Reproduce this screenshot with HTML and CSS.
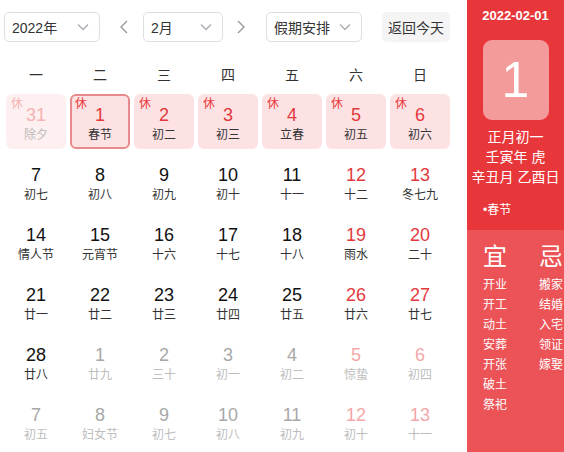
FILE: index.html
```html
<!DOCTYPE html>
<html lang="zh-CN">
<head>
    <meta charset="UTF-8">
    <meta name="viewport" content="width=device-width, initial-scale=1.0">
    <title>万年历</title>
    <link rel="stylesheet" href="styles.css">
</head>
<body>
    <div class="calendar">
        <div class="main">
            <div class="toolbar">
                <div class="select year">
                    <span>2022年</span>
                    <svg class="caret" width="12" height="8" viewBox="0 0 12 8"><polyline points="1,1.5 6,6.5 11,1.5" fill="none" stroke="#a8abb2" stroke-width="1.3"/></svg>
                </div>
                <div class="arrow prev">
                    <svg width="8" height="14" viewBox="0 0 8 14"><polyline points="7,1 1,7 7,13" fill="none" stroke="#999" stroke-width="1.4"/></svg>
                </div>
                <div class="select month">
                    <span>2月</span>
                    <svg class="caret" width="12" height="8" viewBox="0 0 12 8"><polyline points="1,1.5 6,6.5 11,1.5" fill="none" stroke="#a8abb2" stroke-width="1.3"/></svg>
                </div>
                <div class="arrow next">
                    <svg width="8" height="14" viewBox="0 0 8 14"><polyline points="1,1 7,7 1,13" fill="none" stroke="#999" stroke-width="1.4"/></svg>
                </div>
                <div class="select holiday">
                    <span>假期安排</span>
                    <svg class="caret" width="12" height="8" viewBox="0 0 12 8"><polyline points="1,1.5 6,6.5 11,1.5" fill="none" stroke="#a8abb2" stroke-width="1.3"/></svg>
                </div>
                <button class="today-btn">返回今天</button>
            </div>

            <div class="week">
                <span>一</span><span>二</span><span>三</span><span>四</span><span>五</span><span>六</span><span>日</span>
            </div>

            <div class="days">
                <div class="day rest prev"><i>休</i><b>31</b><small>除夕</small></div>
                <div class="day rest selected"><i>休</i><b>1</b><small>春节</small></div>
                <div class="day rest"><i>休</i><b>2</b><small>初二</small></div>
                <div class="day rest"><i>休</i><b>3</b><small>初三</small></div>
                <div class="day rest"><i>休</i><b>4</b><small>立春</small></div>
                <div class="day rest"><i>休</i><b>5</b><small>初五</small></div>
                <div class="day rest"><i>休</i><b>6</b><small>初六</small></div>

                <div class="day"><b>7</b><small>初七</small></div>
                <div class="day"><b>8</b><small>初八</small></div>
                <div class="day"><b>9</b><small>初九</small></div>
                <div class="day"><b>10</b><small>初十</small></div>
                <div class="day"><b>11</b><small>十一</small></div>
                <div class="day weekend"><b>12</b><small>十二</small></div>
                <div class="day weekend"><b>13</b><small>冬七九</small></div>

                <div class="day"><b>14</b><small>情人节</small></div>
                <div class="day"><b>15</b><small>元宵节</small></div>
                <div class="day"><b>16</b><small>十六</small></div>
                <div class="day"><b>17</b><small>十七</small></div>
                <div class="day"><b>18</b><small>十八</small></div>
                <div class="day weekend"><b>19</b><small>雨水</small></div>
                <div class="day weekend"><b>20</b><small>二十</small></div>

                <div class="day"><b>21</b><small>廿一</small></div>
                <div class="day"><b>22</b><small>廿二</small></div>
                <div class="day"><b>23</b><small>廿三</small></div>
                <div class="day"><b>24</b><small>廿四</small></div>
                <div class="day"><b>25</b><small>廿五</small></div>
                <div class="day weekend"><b>26</b><small>廿六</small></div>
                <div class="day weekend"><b>27</b><small>廿七</small></div>

                <div class="day"><b>28</b><small>廿八</small></div>
                <div class="day other"><b>1</b><small>廿九</small></div>
                <div class="day other"><b>2</b><small>三十</small></div>
                <div class="day other"><b>3</b><small>初一</small></div>
                <div class="day other"><b>4</b><small>初二</small></div>
                <div class="day other weekend"><b>5</b><small>惊蛰</small></div>
                <div class="day other weekend"><b>6</b><small>初四</small></div>

                <div class="day other"><b>7</b><small>初五</small></div>
                <div class="day other"><b>8</b><small>妇女节</small></div>
                <div class="day other"><b>9</b><small>初七</small></div>
                <div class="day other"><b>10</b><small>初八</small></div>
                <div class="day other"><b>11</b><small>初九</small></div>
                <div class="day other weekend"><b>12</b><small>初十</small></div>
                <div class="day other weekend"><b>13</b><small>十一</small></div>
            </div>
        </div>

        <div class="side">
            <div class="side-top">
                <div class="side-date">2022-02-01</div>
                <div class="side-day">1</div>
                <div class="side-lunar">
                    <div>正月初一</div>
                    <div>壬寅年 虎</div>
                    <div>辛丑月 乙酉日</div>
                </div>
                <div class="side-fest">•春节</div>
            </div>
            <div class="side-bottom">
                <div class="yiji">
                    <div class="yiji-col">
                        <div class="yiji-title">宜</div>
                        <div>开业</div>
                        <div>开工</div>
                        <div>动土</div>
                        <div>安葬</div>
                        <div>开张</div>
                        <div>破土</div>
                        <div>祭祀</div>
                    </div>
                    <div class="yiji-col">
                        <div class="yiji-title">忌</div>
                        <div>搬家</div>
                        <div>结婚</div>
                        <div>入宅</div>
                        <div>领证</div>
                        <div>嫁娶</div>
                    </div>
                </div>
            </div>
        </div>
    </div>
</body>
</html>
```

FILE: styles.css
```css
body {
    margin: 0;
    padding: 0;
    background: #fff;
    font-family: "Liberation Sans", "Noto Sans CJK SC", sans-serif;
    color: #333;
}
.calendar {
    display: flex;
    width: 564px;
    height: 452px;
    overflow: hidden;
}
.main {
    width: 467px;
    flex: none;
}

/* toolbar */
.toolbar {
    display: flex;
    align-items: center;
    padding: 12px 0 0 4px;
    height: 30px;
}
.select {
    flex: none;
    box-sizing: border-box;
    height: 30px;
    border: 1px solid #dcdfe6;
    border-radius: 5px;
    display: flex;
    align-items: center;
    justify-content: space-between;
    padding: 0 10px 0 7px;
    font-size: 14px;
    color: #333;
}
.select.year { width: 96px; }
.select.month { width: 80px; }
.select.holiday { width: 96px; }
.arrow {
    display: flex;
    align-items: center;
}
.arrow.prev { margin: 0 15px 0 20px; }
.arrow.next { margin: 0 21px 0 14px; }
.today-btn {
    flex: none;
    margin-left: 20px;
    height: 30px;
    width: 68px;
    padding: 0;
    border: none;
    border-radius: 5px;
    background: #f4f4f5;
    font-family: inherit;
    font-size: 14px;
    color: #333;
}

/* weekday header */
.week {
    display: grid;
    grid-template-columns: repeat(7, 60px);
    column-gap: 4px;
    margin: 18px 0 4px 6px;
    height: 30px;
    line-height: 30px;
    text-align: center;
    font-size: 14px;
    color: #333;
}

/* days */
.days {
    display: grid;
    grid-template-columns: repeat(7, 60px);
    grid-auto-rows: 55px;
    column-gap: 4px;
    row-gap: 5px;
    margin-left: 6px;
}
.day {
    position: relative;
    box-sizing: border-box;
    border-radius: 6px;
    padding-top: 9px;
    text-align: center;
}
.day b {
    display: block;
    font-weight: normal;
    font-size: 18px;
    line-height: 24px;
    color: #111;
}
.day small {
    display: block;
    font-size: 12px;
    line-height: 16px;
    color: #333;
}
.day i {
    position: absolute;
    top: 3px;
    left: 5px;
    font-style: normal;
    font-size: 12px;
    line-height: 14px;
    color: #e8373b;
}
.day.rest {
    background: #fde2e3;
}
.day.rest b,
.day.weekend b {
    color: #e3393d;
}
.day.selected {
    border: 2px solid #e88a8c;
    padding-top: 7px;
}
.day.selected i {
    top: 1px;
    left: 3px;
}
.day.prev {
    background: #fef0f0;
}
.day.prev i,
.day.prev b {
    color: #f5b3b4;
}
.day.prev small {
    color: #bbb;
}
.day.other b {
    color: #a8a8a8;
}
.day.other small {
    color: #bdbdbd;
}
.day.other.weekend b {
    color: #f3a7a8;
}

/* side panel */
.side {
    width: 97px;
    flex: none;
    color: #fff;
}
.side-top {
    background: #e8373b;
    height: 230px;
    box-sizing: border-box;
    padding-top: 6px;
}
.side-date {
    text-align: center;
    font-size: 13px;
    font-weight: bold;
    line-height: 20px;
}
.side-day {
    width: 66px;
    height: 80px;
    margin: 14px auto 0;
    border-radius: 9px;
    background: #f39a9b;
    text-align: center;
    font-size: 50px;
    line-height: 80px;
}
.side-lunar {
    margin-top: 7px;
    text-align: center;
    font-size: 14px;
    line-height: 20px;
}
.side-fest {
    margin-top: 14px;
    padding-left: 16px;
    font-size: 12px;
    line-height: 18px;
}
.side-bottom {
    background: #ec5357;
    height: 222px;
    box-sizing: border-box;
    padding: 14px 0 0 16px;
}
.yiji {
    display: flex;
}
.yiji-col {
    flex: none;
    width: 56px;
    font-size: 12px;
    line-height: 20px;
}
.yiji-col + .yiji-col {
    width: 30px;
}
.yiji-title {
    font-size: 24px;
    line-height: 26px;
    margin-bottom: 5px;
}
```
